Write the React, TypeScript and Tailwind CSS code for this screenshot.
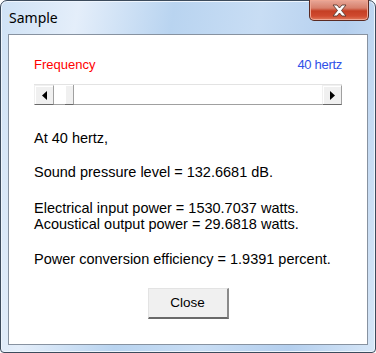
import React from 'react';

const ArrowLeft = () => (
  <svg width="5" height="9" viewBox="0 0 5 9">
    <polygon points="5,0 0,4.5 5,9" fill="#000" />
  </svg>
);

const ArrowRight = () => (
  <svg width="5" height="9" viewBox="0 0 5 9">
    <polygon points="0,0 5,4.5 0,9" fill="#000" />
  </svg>
);

const ScrollButton = ({ children }: { children: React.ReactNode }) => (
  <div className="w-[20px] h-[20px] bg-[#f0f0f0] border-t border-l border-t-[#f0f0f0] border-l-[#f0f0f0] border-b border-r border-b-[#696969] border-r-[#a0a0a0] shadow-[inset_1px_1px_0_#fff] flex items-center justify-center">
    {children}
  </div>
);

const Sample = () => {
  return (
    <div className="w-[376px] h-[353px] overflow-hidden bg-white">
      <div
        className="relative w-[376px] h-[353px] rounded-t-[7px] rounded-b-[4px] border border-[#3c4b5c] bg-[linear-gradient(100deg,#cfe2f5_0%,#e4eefa_18%,#b9d4f0_40%,#c8ddf4_60%,#b4cfee_80%,#d6e6f7_100%)] shadow-[inset_0_0_0_1px_#eef5fd]"
        style={{ fontFamily: '"Liberation Sans", Arial, sans-serif' }}
      >
        {/* title bar */}
        <div className="h-[33px] flex items-start pl-[8px] pt-[7px]">
          <span
            className="text-[14px] text-black leading-[20px]"
            style={{ fontFamily: '"Noto Sans", "Open Sans", sans-serif' }}
          >
            Sample
          </span>
        </div>
        <div className="absolute top-[-1px] right-[6px] w-[60px] h-[21px] rounded-b-[5px] border border-[#5a2a22] border-t-0 bg-[linear-gradient(180deg,#e8a899_0%,#d7806c_40%,#c53f24_55%,#cf4a2f_80%,#e07a5c_100%)] shadow-[inset_0_0_0_1px_#eea693] flex items-center justify-center">
          <svg width="17" height="13" viewBox="0 0 17 13">
            <path
              d="M2 1 L6 1 L8.5 4 L11 1 L15 1 L10.5 6.5 L15 12 L11 12 L8.5 9 L6 12 L2 12 L6.5 6.5 Z"
              fill="#fff"
              stroke="#59392f"
              strokeWidth="0.9"
              strokeLinejoin="round"
            />
          </svg>
        </div>

        {/* client area */}
        <div className="ml-[7px] mr-[7px] h-[311px] bg-white border border-[#8792a0] text-[14.5px] leading-[16px] text-black pl-[25px] pr-[25px]">
          <div className="flex justify-between pt-[22px] text-[13px]">
            <span className="text-[#ff0000]">Frequency</span>
            <span className="text-[#3050e8] tracking-[-0.3px]">40 hertz</span>
          </div>

          <div className="mt-[11px] h-[21px] flex border-t border-t-[#e3e3e3] border-b border-b-[#a0a0a0] bg-white">
            <ScrollButton>
              <ArrowLeft />
            </ScrollButton>
            <div className="flex-1 flex bg-white">
              <div className="ml-[11px] w-[9px] h-[20px] bg-[#f0f0f0] border-b border-r border-b-[#696969] border-r-[#a0a0a0] shadow-[inset_1px_1px_0_#fff]" />
            </div>
            <ScrollButton>
              <ArrowRight />
            </ScrollButton>
          </div>

          <p className="mt-[25px]">At 40 hertz,</p>
          <p className="mt-[18px]">Sound pressure level = 132.6681 dB.</p>
          <p className="mt-[20px]">Electrical input power = 1530.7037 watts.</p>
          <p>Acoustical output power = 29.6818 watts.</p>
          <p className="mt-[19px]">Power conversion efficiency = 1.9391 percent.</p>

          <div className="flex justify-center mt-[21px]">
            <button className="w-[81px] h-[31px] bg-[#f0f0f0] border-t border-l border-t-[#e3e3e3] border-l-[#e3e3e3] border-b-2 border-r-2 border-b-[#696969] border-r-[#8a8a8a] text-[13.5px] text-black">
              Close
            </button>
          </div>
        </div>
      </div>
    </div>
  );
};

export default function App() {
  return <Sample />;
}
